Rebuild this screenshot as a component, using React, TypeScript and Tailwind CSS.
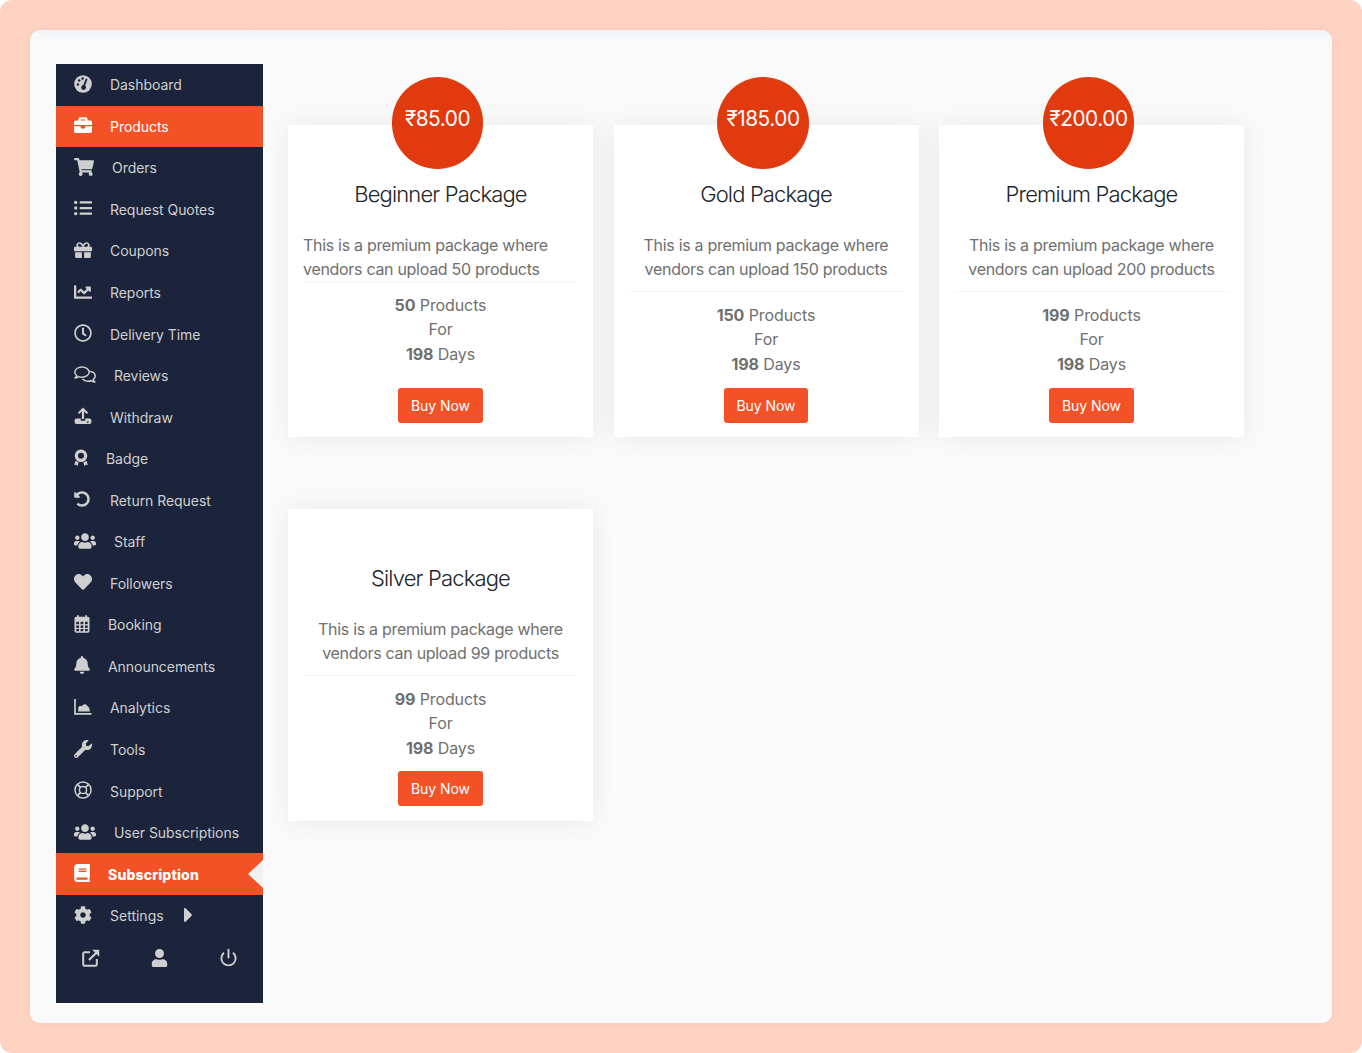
import React from 'react';
import {
  FaBriefcase, FaShoppingCart, FaListUl, FaGift, FaChartLine, FaRegClock,
  FaUndoAlt, FaUsers, FaHeart, FaBell, FaWrench,
  FaBook, FaCog, FaCaretRight, FaUser,
} from 'react-icons/fa';
import { FiPower } from 'react-icons/fi';

type IconProps = { className?: string };

function DashIcon({ className }: IconProps) {
  return (
    <svg viewBox="0 0 18 18" className={className}>
      <circle cx="9" cy="9" r="8.8" fill="currentColor" />
      <g fill="#1b243b">
        <circle cx="3.9" cy="9.6" r="1.25" />
        <circle cx="5.2" cy="5.6" r="1.25" />
        <circle cx="8.6" cy="3.6" r="1.25" />
        <path d="M11.9 3.4 13.5 4 11.1 10.6a2.4 2.4 0 1 1-1.8-.5Z" />
      </g>
    </svg>
  );
}

function ReviewsIcon({ className }: IconProps) {
  return (
    <svg viewBox="0 0 22 18" className={className} fill="none" stroke="currentColor" strokeWidth="1.5" strokeLinejoin="round">
      <path d="M8 1C4 1 .8 3.3.8 6.2c0 1.4.7 2.6 1.9 3.5-.3.9-.9 1.6-1.6 2.2 1.4-.1 2.7-.6 3.7-1.3 1 .4 2.1.6 3.2.6 4 0 7.2-2.3 7.2-5S12 1 8 1Z" />
      <path d="M15.5 5.2c3.2.4 5.7 2.4 5.700 4.900 0 1.400-.8 2.600-2 3.500.3 1 1 1.800 1.700 2.500-1.500-.1-2.900-.6-3.900-1.400-1 .4-2 .5-3 .5-2.300 0-4.400-.8-5.600-2.200" />
    </svg>
  );
}

function WithdrawIcon({ className }: IconProps) {
  return (
    <svg viewBox="0 0 18 18" className={className}>
      <path fill="currentColor" d="M9 .6 14.200 5.800 12.900 7.100 10.100 4.400V12H7.900V4.400L5.100 7.100 3.800 5.800Z" />
      <path fill="currentColor" fillRule="evenodd" d="M2.400 11.400H6.800V13.800H11.200V11.400H15.600A1.800 1.800 0 0 1 17.400 13.200V15.200A1.800 1.800 0 0 1 15.600 17H2.400A1.800 1.800 0 0 1 .6 15.200V13.200A1.800 1.800 0 0 1 2.400 11.400ZM13.800 14.200a.9.9 0 1 0 0 1.800.9.9 0 0 0 0-1.800Z" />
    </svg>
  );
}

function BadgeIcon({ className }: IconProps) {
  return (
    <svg viewBox="0 0 14 18" className={className}>
      <path fill="currentColor" fillRule="evenodd" d="M7 .4a6.300 6.300 0 1 1 0 12.600A6.300 6.300 0 0 1 7 .4Zm0 3.300a3 3 0 1 0 0 6 3 3 0 0 0 0-6Z" />
      <path fill="currentColor" d="M1.500 11.800 4.600 13.600 3.400 17.600 2.400 15.700.2 16Zm11 0 1.300 4.200-2.200-.3-1 1.900-1.200-4Z" />
    </svg>
  );
}

function CalendarIcon({ className }: IconProps) {
  return (
    <svg viewBox="0 0 16 18" className={className}>
      <path fill="currentColor" d="M3 .2h1.800v2H3Zm8.200 0H13v2h-1.800Z" />
      <rect x="0.500" y="1.800" width="15" height="16" rx="1.800" fill="currentColor" />
      <g fill="#1b243b">
        <rect x="2.300" y="6.800" width="2.700" height="2.400" />
        <rect x="6.600" y="6.800" width="2.700" height="2.400" />
        <rect x="11" y="6.800" width="2.700" height="2.400" />
        <rect x="2.300" y="10.500" width="2.700" height="2.400" />
        <rect x="6.600" y="10.500" width="2.700" height="2.400" />
        <rect x="11" y="10.500" width="2.700" height="2.400" />
        <rect x="2.300" y="14" width="2.700" height="2.200" />
        <rect x="6.600" y="14" width="2.700" height="2.200" />
        <rect x="11" y="14" width="2.700" height="2.200" />
      </g>
    </svg>
  );
}

function AnalyticsIcon({ className }: IconProps) {
  return (
    <svg viewBox="0 0 18 18" className={className}>
      <path d="M1 1v14.800h16.500" fill="none" stroke="currentColor" strokeWidth="1.700" />
      <path fill="currentColor" d="M4.200 13.400V9.800c.5-1.300 1.300-2 2-2 .6 0 1 .5 1.400.8.700-1.400 2-2.300 3.200-2.300 1.500 0 2.400 1.200 3 2.300.9.300 1.900 1.400 2 4.800Z" />
    </svg>
  );
}

function SupportIcon({ className }: IconProps) {
  return (
    <svg viewBox="0 0 18 18" className={className} fill="none" stroke="currentColor" strokeWidth="1.500">
      <circle cx="9" cy="9" r="8" />
      <circle cx="9" cy="9" r="3.600" />
      <path d="M3.600 3.600 6.400 6.400M14.400 3.600 11.600 6.400M3.600 14.400 6.400 11.600M14.400 14.400 11.600 11.600" strokeWidth="1.800" />
    </svg>
  );
}

function ExtLink() {
  return (
    <svg viewBox="0 0 18 18" className="h-[18px] w-[18px]" fill="none" stroke="currentColor" strokeWidth="2">
      <path d="M8 3.200H2.600a1.400 1.400 0 0 0-1.400 1.400v10.800a1.400 1.400 0 0 0 1.400 1.400h10.800a1.400 1.400 0 0 0 1.400-1.400V10" />
      <path d="M7 11 15 3" strokeWidth="2.200" />
      <path d="M10.200.8h7v7Z" fill="currentColor" stroke="none" />
    </svg>
  );
}

type Item = { label: string; icon: React.ComponentType<IconProps>; box: string; size: string; active?: boolean };

const items: Item[] = [
  { label: 'Dashboard', icon: DashIcon, box: 'w-[37px]', size: 'w-[18px] h-[18px]' },
  { label: 'Products', icon: FaBriefcase, box: 'w-[37px]', size: 'w-[18px] h-[18px]', active: true },
  { label: 'Orders', icon: FaShoppingCart, box: 'w-[39px]', size: 'w-[20px] h-[18px]' },
  { label: 'Request Quotes', icon: FaListUl, box: 'w-[37px]', size: 'w-[18px] h-[18px]' },
  { label: 'Coupons', icon: FaGift, box: 'w-[37px]', size: 'w-[18px] h-[18px]' },
  { label: 'Reports', icon: FaChartLine, box: 'w-[37px]', size: 'w-[18px] h-[18px]' },
  { label: 'Delivery Time', icon: FaRegClock, box: 'w-[37px]', size: 'w-[18px] h-[18px]' },
  { label: 'Reviews', icon: ReviewsIcon, box: 'w-[41px]', size: 'w-[22px] h-[18px]' },
  { label: 'Withdraw', icon: WithdrawIcon, box: 'w-[37px]', size: 'w-[18px] h-[18px]' },
  { label: 'Badge', icon: BadgeIcon, box: 'w-[33px]', size: 'w-[14px] h-[18px]' },
  { label: 'Return Request', icon: FaUndoAlt, box: 'w-[37px]', size: 'w-[16px] h-[16px]' },
  { label: 'Staff', icon: FaUsers, box: 'w-[41px]', size: 'w-[22px] h-[18px]' },
  { label: 'Followers', icon: FaHeart, box: 'w-[37px]', size: 'w-[18px] h-[18px]' },
  { label: 'Booking', icon: CalendarIcon, box: 'w-[35px]', size: 'w-[16px] h-[18px]' },
  { label: 'Announcements', icon: FaBell, box: 'w-[35px]', size: 'w-[16px] h-[18px]' },
  { label: 'Analytics', icon: AnalyticsIcon, box: 'w-[37px]', size: 'w-[18px] h-[18px]' },
  { label: 'Tools', icon: FaWrench, box: 'w-[37px]', size: 'w-[18px] h-[18px]' },
  { label: 'Support', icon: SupportIcon, box: 'w-[37px]', size: 'w-[18px] h-[18px]' },
  { label: 'User Subscriptions', icon: FaUsers, box: 'w-[41px]', size: 'w-[22px] h-[18px]' },
];

function Row({ item }: { item: Item }) {
  const Icon = item.icon;
  return (
    <div className={`flex h-[41.56px] items-center pl-[17px] text-[14px] tracking-[-0.05px] ${item.active ? 'bg-[#f25225] text-white' : 'text-[#cfcfcf]'}`}>
      <div className={`${item.box} shrink-0`}>
        <Icon className={`${item.size} block translate-x-[1px] -translate-y-[1px]`} />
      </div>
      <span className="-translate-y-[0.5px]">{item.label}</span>
    </div>
  );
}

function Sidebar() {
  return (
    <aside className="h-[939px] w-[207px] shrink-0 bg-[#1b243b]">
      {items.map((i) => <Row key={i.label} item={i} />)}
      <div className="relative flex h-[41.56px] items-center bg-[#f25225] pl-[17px] text-[14px] font-extrabold tracking-[0.15px] text-white">
        <div className="w-[35px] shrink-0"><FaBook className="block h-[18px] w-[16px] translate-x-[1px] -translate-y-[1px]" /></div>
        <span>Subscription</span>
        <div className="absolute right-0 top-[7px] h-0 w-0 border-y-[14px] border-r-[15px] border-y-transparent border-r-[#f1f1f1]" />
      </div>
      <div className="flex h-[41.56px] items-center pl-[17px] text-[14px] text-[#cfcfcf]">
        <div className="w-[37px] shrink-0"><FaCog className="block h-[18px] w-[18px] translate-x-[1px] -translate-y-[1px]" /></div>
        <span>Settings</span>
        <FaCaretRight className="ml-[20px] h-[24px] w-[9px] -translate-y-[1px]" />
      </div>
      <div className="grid grid-cols-3 items-center pt-[12px] text-[#cfcfcf]">
        <div className="flex justify-center"><ExtLink /></div>
        <div className="flex justify-center"><FaUser className="h-[18px] w-[16px] -translate-x-[0.5px]" /></div>
        <div className="flex justify-center"><FiPower className="h-[19px] w-[19px]" strokeWidth={2.4} /></div>
      </div>
    </aside>
  );
}

type Pkg = { price?: string; title: string; line1: string; line2: string; n: string; left?: boolean; silver?: boolean };

function Card({ p }: { p: Pkg }) {
  return (
    <div className="flex h-[312px] flex-col items-center bg-white px-[15px] text-center shadow-[0_0_26px_rgba(0,0,0,0.07)]">
      {p.price ? (
        <div className="-ml-[6px] -mt-[48px] flex h-[91.5px] w-[91.5px] shrink-0 items-center justify-center rounded-full bg-[#e03a0e] pb-[8px] text-[20.8px] tracking-[-0.45px] text-white">
          {p.price}
        </div>
      ) : (
        <div className="-mt-[48px] h-[91.5px] w-[91.5px] shrink-0" />
      )}
      <h3 className="mt-[8px] text-[22px] font-light leading-[34px] tracking-[-0.85px] text-[#212529]">{p.title}</h3>
      <p className={`mt-[22px] w-full text-[16px] leading-[24.2px] tracking-[-0.3px] text-[#6f6f6f] ${p.left ? 'text-left' : 'text-center'}`}>
        {p.line1}<br />{p.line2}
      </p>
      <div className={`h-px w-full bg-[#f5f5f5] ${p.left ? 'mt-[1px]' : 'mt-[10px]'}`} />
      <div className={`text-[16px] leading-[24.4px] tracking-[-0.1px] text-[#6f6f6f] ${p.left ? 'mt-[10px]' : 'mt-[11px]'}`}>
        <div><b className="font-bold">{p.n}</b> Products</div>
        <div>For</div>
        <div><b className="font-bold">198</b> Days</div>
      </div>
      <button className={`h-[34.5px] w-[84.5px] rounded-[3px] bg-[#f25225] text-[14px] tracking-[-0.05px] text-white ${p.silver ? 'mt-[11px]' : p.left ? 'mt-[22px]' : 'mt-[12px]'}`}>Buy Now</button>
    </div>
  );
}

const pkgs: Pkg[] = [
  { price: '₹85.00', title: 'Beginner Package', line1: 'This is a premium package where', line2: 'vendors can upload 50 products', n: '50', left: true },
  { price: '₹185.00', title: 'Gold Package', line1: 'This is a premium package where', line2: 'vendors can upload 150 products', n: '150' },
  { price: '₹200.00', title: 'Premium Package', line1: 'This is a premium package where', line2: 'vendors can upload 200 products', n: '199' },
  { title: 'Silver Package', line1: 'This is a premium package where', line2: 'vendors can upload 99 products', n: '99', silver: true },
];

export default function App() {
  return (
    <div className="h-[1053px] w-[1362px] overflow-hidden bg-white font-['Inter',sans-serif]">
      <div className="h-full w-full rounded-[12px] bg-[#ffd3c2] p-[30px]">
        <div className="flex h-[993px] w-[1302px] rounded-[10px] bg-[linear-gradient(#f3f5f9,#fafafa_16px)] pl-[26px] pt-[34px] shadow-[0_0_8px_rgba(0,0,0,0.05)]">
          <Sidebar />
          <main className="ml-[25px] grid w-[957px] grid-cols-[305px_305px_305px] content-start gap-x-[20.5px] gap-y-[72px] pt-[61px]">
            {pkgs.map((p) => <Card key={p.title} p={p} />)}
          </main>
        </div>
      </div>
    </div>
  );
}
